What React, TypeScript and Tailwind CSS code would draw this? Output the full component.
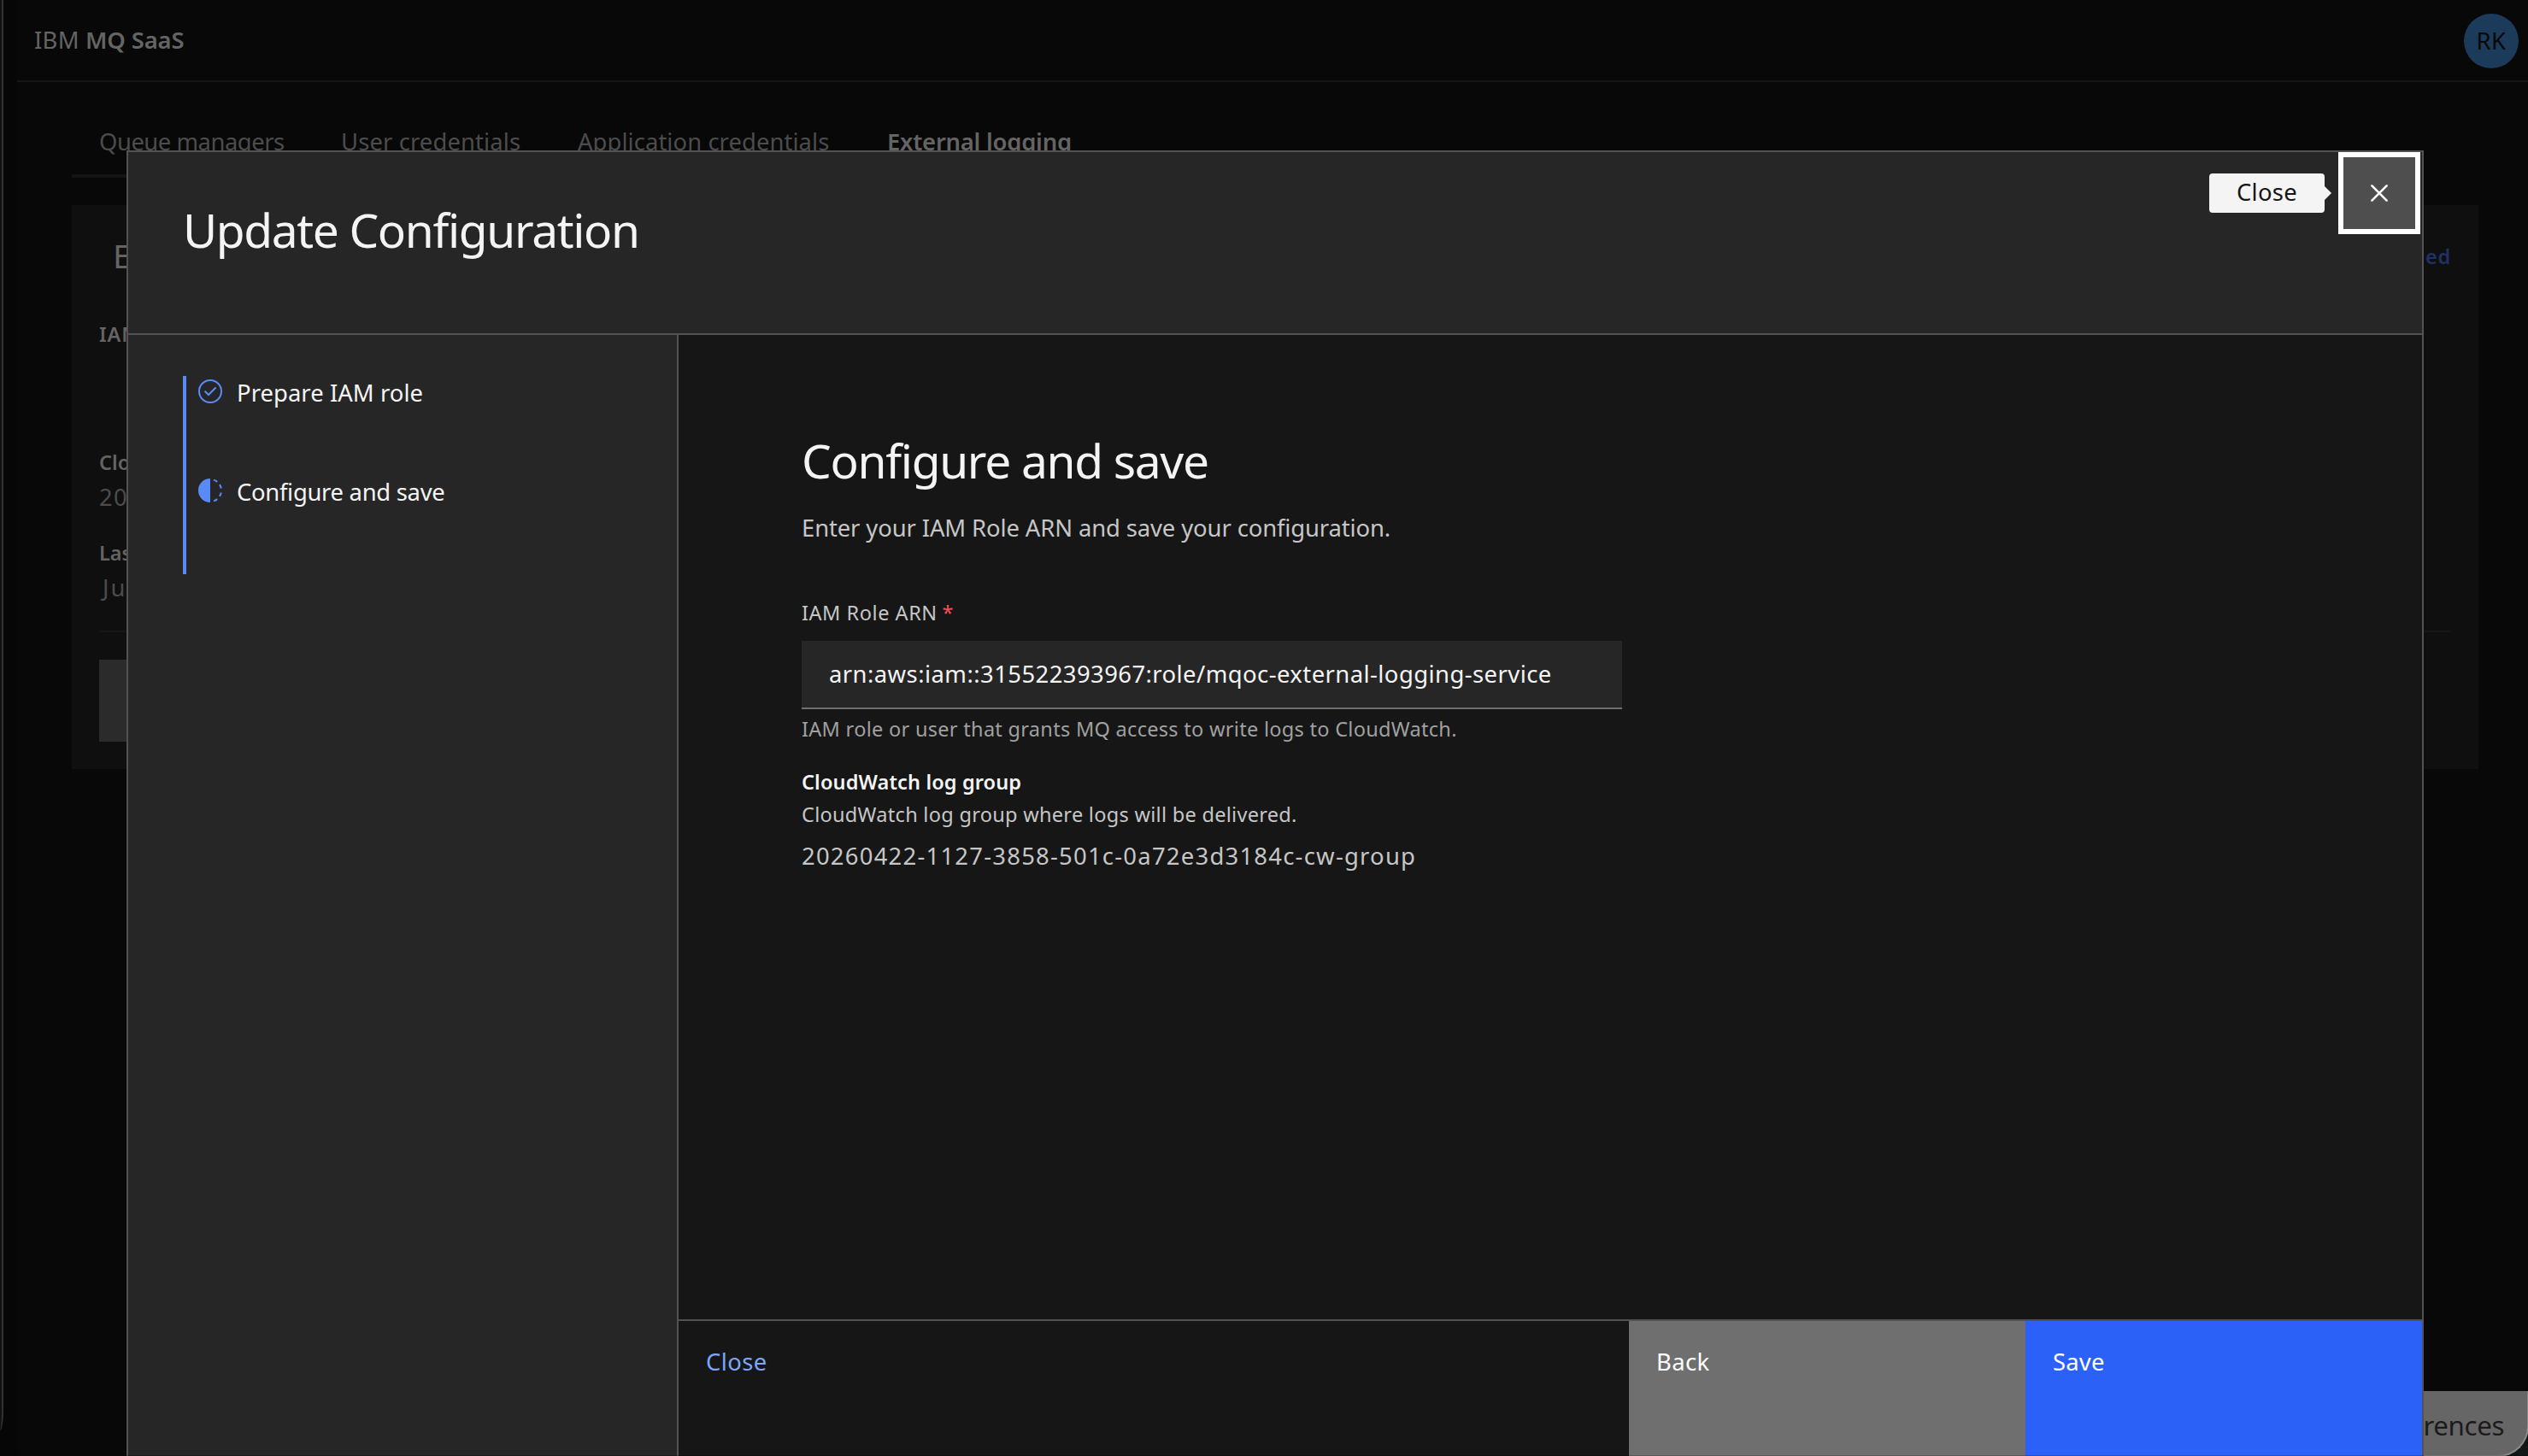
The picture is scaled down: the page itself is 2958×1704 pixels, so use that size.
import React from 'react';

const TABS = [
  { label: 'Queue managers', className: 'w-[283px] tracking-[-0.47px]' },
  { label: 'User credentials', className: 'w-[277px] tracking-[0.13px]' },
  { label: 'Application credentials', className: 'w-[362px] tracking-[0.08px]' },
  { label: 'External logging', className: 'font-semibold text-[#646464] tracking-[-0.22px]' },
];

const CompleteIcon: React.FC = () => (
  <svg width="28" height="28" viewBox="0 0 28 28" fill="none" stroke="currentColor" strokeWidth="2">
    <circle cx="14" cy="14" r="13" />
    <path d="M7.6 13.7 12 18 20.6 9.5" />
  </svg>
);

const CurrentIcon: React.FC = () => (
  <svg width="28" height="28" viewBox="0 0 28 28" fill="none">
    <path d="M14 0a14 14 0 0 0 0 28z" fill="currentColor" />
    <path
      d="M18.02 1.64A13 13 0 0 1 22.18 3.9M25.02 7.11A13 13 0 0 1 26.76 11.52M26.76 16.48A13 13 0 0 1 25.02 20.89M22.18 24.1A13 13 0 0 1 18.02 26.36"
      stroke="currentColor"
      strokeWidth="2"
    />
  </svg>
);

const STEPS = [
  { label: 'Prepare IAM role', icon: <CompleteIcon />, className: 'tracking-[0.07px]' },
  { label: 'Configure and save', icon: <CurrentIcon />, className: 'tracking-[-0.28px]' },
];

const PageBackground: React.FC = () => (
  <div className="flex h-full text-[27.4px] leading-[37px] text-[#4c4c4c]">
    {/* Window edge */}
    <div className="w-5 shrink-0 bg-[#060606]">
      <div className="h-[1674px] w-1 rounded-br-[4px_24px] border-r-2 border-[#333333] bg-[#111111]" />
    </div>

    <div className="min-w-0 flex-1">
      {/* Header */}
      <header className="flex h-24 items-start justify-between border-b-2 border-[#161616] pl-5 pr-[11px] pt-4">
        <div className="flex gap-[7px] leading-[61px] text-[#646464]">
          <span className="tracking-[0.31px]">IBM</span>
          <span className="font-semibold tracking-[-0.1px]">MQ SaaS</span>
        </div>
        <div className="h-16 w-16 rounded-full bg-[#1c3a5a] text-center leading-[63px] tracking-[0.6px] text-[#080808]">
          RK
        </div>
      </header>

      {/* Tabs */}
      <nav className="ml-16 flex h-28 w-[1200px] whitespace-nowrap border-b-4 border-[#141414] pl-8 pt-[51px]">
        {TABS.map((tab) => (
          <span key={tab.label} className={tab.className}>{tab.label}</span>
        ))}
      </nav>

      {/* Logging card */}
      <div className="ml-16 mt-8 h-[660px] w-[2816px] bg-[#0f0f0f] px-8 pt-8">
        <div className="flex justify-between pl-4">
          <h2 className="text-[39px] leading-[53px] text-[#646464]">External logging</h2>
          <span className="mt-3 text-[23.5px] font-semibold leading-8 tracking-[0.8px] text-[#1f3263]">Enabled</span>
        </div>
        <p className="mt-[50px] text-[23.5px] font-semibold leading-8 tracking-[0.9px] text-[#646464]">IAM Role ARN</p>
        <p className="mt-[118px] text-[23.5px] font-semibold leading-8 text-[#646464]">CloudWatch log group</p>
        <p className="mt-1.5 tracking-[1.26px]">20260422-1127-3858-501c-0a72e3d3184c-cw-group</p>
        <p className="mt-[31px] text-[23.5px] font-semibold leading-8 text-[#646464]">Last updated</p>
        <p className="mt-1.5 pl-1 tracking-[2px]">Jul 2, 2026</p>
        <div className="mt-8 border-t-2 border-[#161616]" />
        <div className="mt-8 h-24 w-60 bg-[#2b2b2b]" />
      </div>
    </div>
  </div>
);

const ModalHeader: React.FC = () => (
  <header className="flex h-[214px] items-start justify-between border-b-2 border-[#525252] pl-16 pr-0.5">
    <h1 className="pt-[53px] text-[55px] leading-[75px] tracking-[-1.35px]">Update Configuration</h1>
    <div className="flex items-center">
      <div className="flex h-[46px] w-[135px] items-center justify-center rounded bg-[#f4f4f4] pb-[3px] leading-[37px] tracking-[0.3px] text-[#161616]">
        Close
      </div>
      <svg className="mr-2" width="8" height="16" viewBox="0 0 8 16" fill="#f4f4f4">
        <path d="M0 0 8 8 0 16z" />
      </svg>
      <button className="flex h-24 w-24 items-center justify-center border-[6px] border-white bg-[#4e4e4e]">
        <svg width="20" height="20" viewBox="0 0 20 20" stroke="white" strokeWidth="2.6" strokeLinecap="round">
          <path d="M1.4 1.4 18.6 18.6M18.6 1.4 1.4 18.6" />
        </svg>
      </button>
    </div>
  </header>
);

const ModalSidebar: React.FC = () => (
  <aside className="w-[644px] shrink-0 border-r-2 border-[#525252] pl-16 pt-12">
    {STEPS.map((step) => (
      <div key={step.label} className="flex h-[116px] items-start gap-[17px] border-l-4 border-[#598af8] pl-3.5">
        <span className="mt-1 text-[#598af8]">{step.icon}</span>
        <span className="mt-px">
          <span className={step.className}>{step.label}</span>
        </span>
      </div>
    ))}
  </aside>
);

const ConfigureForm: React.FC = () => (
  <section className="h-[1152px] pl-36 pt-[109px] text-[#c6c6c6]">
    <h2 className="text-[55px] leading-[75px] tracking-[-1.3px] text-[#f4f4f4]">Configure and save</h2>
    <p className="mt-[23px] tracking-[-0.1px]">Enter your IAM Role ARN and save your configuration.</p>

    <label className="mt-[65px] block text-[23.5px] leading-8 tracking-[0.55px]">
      IAM Role ARN <span className="-ml-px text-[#ee5358]">*</span>
    </label>
    <div className="mt-[17px] flex h-20 w-[960px] items-center border-b-2 border-[#6f6f6f] bg-[#262626] pb-px pl-8 tracking-[0.46px] text-[#f4f4f4]">
      arn:aws:iam::315522393967:role/mqoc-external-logging-service
    </div>
    <p className="mt-[7px] text-[23.5px] leading-8 tracking-[0.3px] text-[#a0a0a0]">
      IAM role or user that grants MQ access to write logs to CloudWatch.
    </p>

    <h3 className="mt-[30px] text-[23.5px] font-semibold leading-8 tracking-[0.13px] text-[#f4f4f4]">
      CloudWatch log group
    </h3>
    <p className="mt-1.5 text-[23.5px] leading-8 tracking-[0.3px]">
      CloudWatch log group where logs will be delivered.
    </p>
    <p className="mt-3.5 tracking-[1.26px]">20260422-1127-3858-501c-0a72e3d3184c-cw-group</p>
  </section>
);

export default function App() {
  return (
    <div className="relative h-[1704px] w-[2958px] overflow-hidden bg-[#080808] font-['Noto_Sans','Open_Sans',sans-serif]">
      <PageBackground />

      {/* Cookie preferences */}
      <div className="absolute bottom-0 right-0 h-[76px] w-[340px] overflow-hidden bg-[#101716]">
        <div className="h-[77px] w-[341px] rounded-br-[36px] border-b-2 border-r-2 border-[#8a8a8a] bg-[#666666] pr-[27px] pt-[19px] text-right text-[31.3px] leading-[42px] tracking-[-0.39px] text-[#1b1b1b]">
          Cookie Preferences
        </div>
      </div>

      {/* Modal */}
      <div className="absolute left-[148px] top-44 flex h-[1528px] w-[2688px] flex-col border-2 border-b-0 border-[#525252] bg-[#262626] text-[27.4px] leading-[37px] text-[#f4f4f4]">
        <ModalHeader />
        <div className="flex flex-1">
          <ModalSidebar />
          <main className="flex flex-1 flex-col bg-[#161616]">
            <ConfigureForm />
            <footer className="flex flex-1 items-stretch border-t-2 border-[#525252] text-left">
              <div className="flex-1 pl-8 pt-[29px] tracking-[0.41px] text-[#7ba6fa]">Close</div>
              <div className="w-[464px] bg-[#6f6f6f] pl-8 pt-[29px] tracking-[0.39px] text-white">Back</div>
              <div className="w-[464px] bg-[#2b61f6] pl-8 pt-[29px] tracking-[0.23px] text-white">Save</div>
            </footer>
          </main>
        </div>
      </div>

      <div className="absolute inset-x-0 bottom-0 h-px bg-black/20" />
    </div>
  );
}
